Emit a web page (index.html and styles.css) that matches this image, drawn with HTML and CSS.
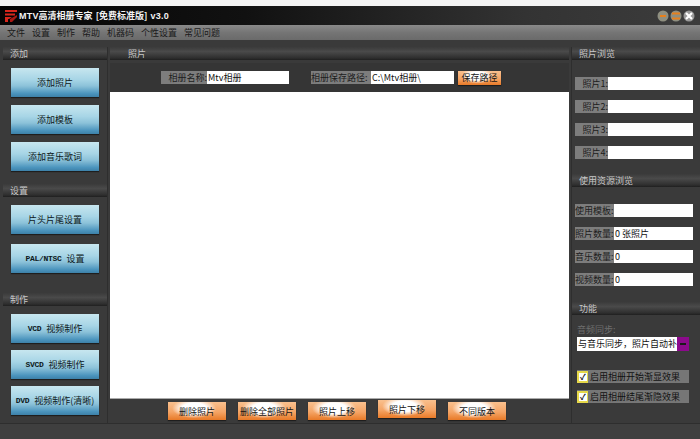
FILE: index.html
```html
<!DOCTYPE html>
<html lang="zh-CN">
<head>
    <meta charset="UTF-8">
    <title>MTV高清相册专家</title>
    <link rel="stylesheet" href="styles.css">
</head>
<body>
    <div id="titlebar">
        <svg class="logo" width="12" height="13" viewBox="0 0 12 13">
            <path d="M0 1h12v2H0zM0 4.500h10v2H0zM0 8h7l-3 2H3v3H0z" fill="#d8261c"/>
            <path d="M5 10l7-4v2l-5 5H5z" fill="#a81812"/>
        </svg>
        <span class="app-name"><span class="lat">MTV</span>高清相册专家 [免费标准版] <span class="lat">v3.0</span></span>
        <div class="win-btns">
            <svg width="38" height="12" viewBox="0 0 38 12">
                <circle cx="6" cy="6" r="5.500" fill="#8f8f80"/>
                <rect x="3" y="5" width="6" height="2" fill="#e8801c"/>
                <circle cx="19" cy="6" r="5.500" fill="#8f8f80"/>
                <rect x="15" y="2.500" width="8" height="2" fill="#e8801c"/>
                <rect x="15" y="7.500" width="8" height="2" fill="#e8801c"/>
                <circle cx="32" cy="6" r="5.500" fill="#9a9a9a"/>
                <path d="M29 3l6 6M35 3l-6 6" stroke="#fff" stroke-width="2.200"/>
            </svg>
        </div>
    </div>
    <div id="menubar">
        <span>文件</span><span>设置</span><span>制作</span><span>帮助</span><span>机器码</span><span>个性设置</span><span>常见问题</span>
    </div>

    <div id="main">
        <div id="left">
            <div class="group">
                <div class="head">添加</div>
                <div class="btn-list list-add">
                    <div class="blue-btn">添加照片</div>
                    <div class="blue-btn">添加模板</div>
                    <div class="blue-btn">添加音乐歌词</div>
                </div>
            </div>
            <div class="group group-set">
                <div class="head">设置</div>
                <div class="btn-list list-set">
                    <div class="blue-btn">片头片尾设置</div>
                    <div class="blue-btn"><span class="lat">PAL/NTSC</span> 设置</div>
                </div>
            </div>
            <div class="group group-make">
                <div class="head">制作</div>
                <div class="btn-list list-make">
                    <div class="blue-btn"><span class="lat">VCD</span> 视频制作</div>
                    <div class="blue-btn"><span class="lat">SVCD</span> 视频制作</div>
                    <div class="blue-btn"><span class="lat">DVD</span> 视频制作(清晰)</div>
                </div>
            </div>
        </div>

        <div id="center">
            <div class="head head-photo">照片</div>
            <div id="toolbar">
                <span class="label label-name">相册名称:</span>
                <span class="field field-name">Mtv相册</span>
                <span class="label label-path">相册保存路径:</span>
                <span class="field field-path">C:\Mtv相册\</span>
                <div class="orange-btn save-btn">保存路径</div>
            </div>
            <div id="canvas"></div>
            <div id="actions">
                <div class="orange-btn">删除照片</div>
                <div class="orange-btn">删除全部照片</div>
                <div class="orange-btn">照片上移</div>
                <div class="orange-btn raised">照片下移</div>
                <div class="orange-btn">不同版本</div>
            </div>
        </div>

        <div id="right">
            <div class="head head-right">照片浏览</div>
            <div class="rows rows-photo">
                <div class="row"><span class="label">照片1:</span><span class="field"></span></div>
                <div class="row"><span class="label">照片2:</span><span class="field"></span></div>
                <div class="row"><span class="label">照片3:</span><span class="field"></span></div>
                <div class="row"><span class="label">照片4:</span><span class="field"></span></div>
            </div>
            <div class="head head-right head-res">使用资源浏览</div>
            <div class="rows rows-res">
                <div class="row"><span class="label">使用模板:</span><span class="field"></span></div>
                <div class="row"><span class="label">照片数量:</span><span class="field">0 张照片</span></div>
                <div class="row"><span class="label">音乐数量:</span><span class="field">0</span></div>
                <div class="row"><span class="label">视频数量:</span><span class="field">0</span></div>
            </div>
            <div class="head head-right head-func">功能</div>
            <div class="sync-label">音频同步:</div>
            <div class="select">
                <span class="select-text">与音乐同步，照片自动补</span>
                <span class="select-arrow"></span>
            </div>
            <div class="check check-first"><span class="box">✓</span>启用相册开始渐显效果</div>
            <div class="check"><span class="box">✓</span>启用相册结尾渐隐效果</div>
        </div>
    </div>
</body>
</html>
```

FILE: styles.css
```css
body {
    margin: 0;
    width: 700px;
    height: 439px;
    overflow: hidden;
    background-color: #3f3f3f;
    font-family: "Noto Sans CJK SC", "Liberation Sans", sans-serif;
    font-size: 9px;
    line-height: 13px;
    color: #111;
    border-top: 6px solid #f4f4f4;
    box-sizing: border-box;
}

.lat {
    font-family: "Liberation Mono", monospace;
    font-size: 8px;
    letter-spacing: -0.3px;
    font-weight: bold;
}

#titlebar {
    display: flex;
    align-items: center;
    height: 19px;
    padding-left: 5px;
    background: linear-gradient(90deg, #050505 0%, #111 35%, #333 75%, #3c3c3c 100%);
}

.logo {
    margin-right: 2px;
}

.app-name {
    color: #f2f2f2;
    font-weight: bold;
    word-spacing: 1px;
}

.app-name .lat {
    font-family: "Liberation Sans", sans-serif;
    font-size: 9px;
    letter-spacing: 0.2px;
}

.win-btns {
    display: flex;
    margin-left: auto;
    margin-right: 5px;
    padding-top: 1px;
}

#menubar {
    display: flex;
    align-items: center;
    gap: 7px;
    height: 15px;
    padding-left: 7px;
    background: linear-gradient(#8a8a8a, #757575 50%, #6a6a6a);
    color: #1a1a1a;
}

#main {
    display: flex;
    padding-top: 7px;
    height: 384px;
    box-sizing: border-box;
    background-color: #3a3a3a;
    border-bottom: 1px solid #2e2e2e;
}

.head {
    height: 13px;
    padding-left: 7px;
    background: linear-gradient(#3b3b3b, #4a4a4a 35%, #2e2e2e 85%, #1f1f1f);
    color: #c8c8c8;
}

/* left column */
#left {
    width: 104px;
    margin-left: 3px;
    border-right: 1px solid #2e2e2e;
}

.group-set {
    margin-top: 13px;
}

.group-make {
    margin-top: 20px;
}

.btn-list {
    display: flex;
    flex-direction: column;
    padding: 8px 0 0 8px;
}

.list-add {
    gap: 8px;
}

.list-set {
    gap: 10px;
}

.list-make {
    gap: 7px;
}

.blue-btn {
    display: flex;
    align-items: center;
    justify-content: center;
    gap: 3px;
    width: 88px;
    height: 29px;
    white-space: pre;
    background: linear-gradient(#c7e6ef, #a7d5e6 40%, #8cc2d9 62%, #4b94bd 88%, #3d81a8);
    box-shadow: 0 1px 1px #1e1e1e;
    color: #0d1820;
}

/* center */
#center {
    width: 459px;
    margin-left: 2px;
}

.head-photo {
    padding-left: 18px;
}

#toolbar {
    display: flex;
    align-items: center;
    height: 29px;
    margin-top: 3px;
    padding-left: 51px;
    background-color: #353535;
    box-sizing: border-box;
}

.label {
    background-color: #7d7d7d;
    color: #1c1c1c;
    height: 13px;
    white-space: nowrap;
}

.field {
    background-color: #fff;
    color: #111;
    height: 13px;
    white-space: nowrap;
    padding-left: 1px;
    box-sizing: border-box;
}

.label-name {
    width: 46px;
    text-align: right;
}

.field-name {
    width: 82px;
}

.label-path {
    width: 60px;
    margin-left: 22px;
}

.field-path {
    width: 83px;
}

.orange-btn {
    display: flex;
    align-items: center;
    justify-content: center;
    width: 58px;
    height: 18px;
    background:
        radial-gradient(ellipse 38% 55% at 45% 35%, #fff 55%, rgba(255, 255, 255, 0) 100%),
        linear-gradient(#f9c08e, #f5a566 55%, #e87a28);
    box-shadow: 0 1px 1px #1e1e1e;
    color: #151515;
    white-space: nowrap;
}

.save-btn {
    width: 43px;
    height: 14px;
    margin-left: 4px;
}

#canvas {
    height: 306px;
    background-color: #fff;
    border-bottom: 1px solid #aaa;
    box-sizing: content-box;
}

#actions {
    display: flex;
    align-items: flex-start;
    gap: 12px;
    padding: 3px 0 0 58px;
}

.raised {
    margin-top: -2px;
}

/* right column */
#right {
    width: 124px;
    margin-left: 2px;
    border-left: 1px solid #2e2e2e;
    box-sizing: border-box;
}

.head-right {
    width: 124px;
}

.rows {
    display: flex;
    flex-direction: column;
    padding-left: 3px;
}

.row {
    display: flex;
}

.rows-photo {
    gap: 10px;
    padding-top: 17px;
}

.rows-photo .label {
    width: 33px;
    text-align: right;
}

.rows-photo .field {
    width: 85px;
}

.head-res {
    margin-top: 15px;
}

.rows-res {
    gap: 10px;
    padding-top: 17px;
}

.rows-res .label {
    width: 39px;
}

.rows-res .field {
    width: 79px;
}

.head-func {
    margin-top: 16px;
}

.sync-label {
    margin: 8px 0 0 5px;
    color: #6e6e6e;
}

.select {
    display: flex;
    width: 112px;
    height: 14px;
    margin: 1px 0 0 5px;
}

.select-text {
    width: 100px;
    overflow: hidden;
    background-color: #fff;
    white-space: nowrap;
    padding-left: 1px;
    box-sizing: border-box;
}

.select-arrow {
    position: relative;
    width: 12px;
    background-color: #8c0a8c;
}

.select-arrow::after {
    content: "";
    position: absolute;
    left: 3px;
    top: 6px;
    width: 6px;
    height: 2px;
    background-color: #1a1a1a;
}

.check {
    display: flex;
    align-items: center;
    width: 112px;
    height: 13px;
    margin: 7px 0 0 5px;
    background-color: #767676;
    color: #111;
    white-space: nowrap;
}

.check-first {
    margin-top: 19px;
}

.box {
    display: flex;
    align-items: center;
    justify-content: center;
    width: 8px;
    height: 8px;
    margin-right: 2px;
    background-color: #fff;
    border: 2px solid #e6d84a;
    border-right-width: 1px;
    font-size: 8px;
    font-weight: bold;
    line-height: 8px;
    color: #111;
}
```
